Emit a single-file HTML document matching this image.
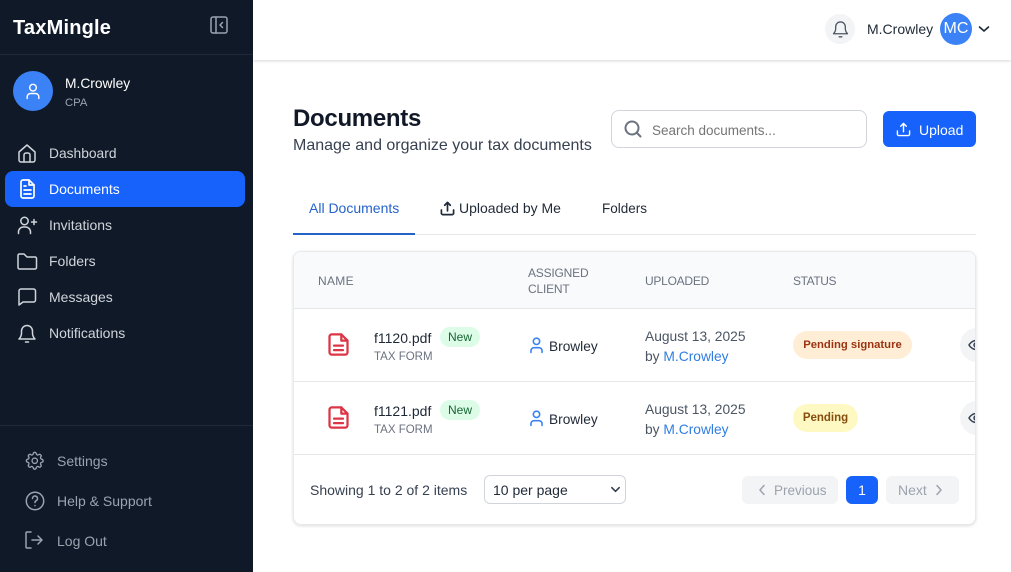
<!DOCTYPE html>
<html><head><meta charset="utf-8"><style>
html,body{margin:0;padding:0;width:1011px;height:572px;overflow:hidden;background:#fff;font-family:"Liberation Sans",sans-serif}
#r{position:relative;width:1011px;height:572px;overflow:hidden}
.t{position:absolute;white-space:nowrap;line-height:20px;font-size:14px}
.b{position:absolute;box-sizing:border-box}
svg{position:absolute;fill:none;stroke:currentColor;stroke-width:1.500;stroke-linecap:round;stroke-linejoin:round}
.n{color:#d1d5db}.f{color:#9ca3af}
.h{font-size:12px;color:#6b7280;line-height:16px}
.g{color:#4b5563;font-size:13.800px}.l{color:#2f7de1}
</style></head><body><div id="r">
<div class="b" style="left:0;top:0;width:253px;height:572px;background:#0f1928"></div>
<div class="b" style="left:0;top:54px;width:253px;height:1px;background:#1f2937"></div>
<div class="b" style="left:0;top:425px;width:253px;height:1px;background:#1f2937"></div>
<div class="t" style="left:13px;top:15px;font-size:20px;line-height:26px;font-weight:700;color:#fff;letter-spacing:.2px">TaxMingle</div>
<svg style="left:208px;top:14px;color:#9ca3af" width="22" height="22" viewBox="0 0 22 22"><rect x="3" y="3" width="16" height="16" rx="2"/><path d="M8 3v16M14.500 8.500L12 11l2.500 2.500"/></svg>
<div class="b" style="left:13px;top:71px;width:40px;height:40px;border-radius:50%;background:#3b82f6"></div>
<svg style="left:23px;top:81px;color:#fff;stroke-width:1.700" width="20" height="20" viewBox="0 0 24 24"><circle cx="12" cy="8" r="4"/><path d="M5 21v-2a4 4 0 0 1 4-4h6a4 4 0 0 1 4 4v2"/></svg>
<div class="t" style="left:65px;top:74px;color:#fff;font-size:13.800px">M.Crowley</div>
<div class="t" style="left:65px;top:93px;font-size:11.300px;color:#9ca3af">CPA</div>

<svg style="left:15px;top:141px;color:#d1d5db" width="24" height="24" viewBox="0 0 24 24"><path d="M4 11l8-7 8 7v8a2 2 0 0 1-2 2H6a2 2 0 0 1-2-2z"/><path d="M9 21v-7a2 2 0 0 1 2-2h2a2 2 0 0 1 2 2v7"/></svg>
<div class="t n" style="left:49px;top:144px;font-size:13.800px">Dashboard</div>
<div class="b" style="left:5px;top:171px;width:240px;height:36px;border-radius:8px;background:#1662fb"></div>
<svg style="left:15px;top:177px;color:#fff;stroke-width:1.700" width="24" height="24" viewBox="0 0 24 24"><path d="M14 3H8a2 2 0 0 0-2 2v14a2 2 0 0 0 2 2h9a2 2 0 0 0 2-2V8z"/><path d="M14 3v5h5M9 13h7M9 17h7M9 9h2"/></svg>
<div class="t" style="left:49px;top:179px;color:#fff">Documents</div>
<svg style="left:15px;top:213px;color:#d1d5db" width="24" height="24" viewBox="0 0 24 24"><circle cx="9.500" cy="8" r="3.700"/><path d="M3.500 20.500V19a5 5 0 0 1 5-5h2a5 5 0 0 1 5 5v1.500M19 6.500v5M16.500 9h5"/></svg>
<div class="t n" style="left:49px;top:215px">Invitations</div>
<svg style="left:15px;top:249px;color:#d1d5db" width="24" height="24" viewBox="0 0 24 24"><path d="M4.500 5h4.500l3 3h8a1.500 1.500 0 0 1 1.500 1.500V18.500a1.500 1.500 0 0 1-1.500 1.500H4.500A1.500 1.500 0 0 1 3 18.500V6.500A1.500 1.500 0 0 1 4.500 5z"/></svg>
<div class="t n" style="left:49px;top:251px">Folders</div>
<svg style="left:15px;top:285px;color:#d1d5db" width="24" height="24" viewBox="0 0 24 24"><path d="M4 20V6a2 2 0 0 1 2-2h12.500a2 2 0 0 1 2 2v9a2 2 0 0 1-2 2H8z"/></svg>
<div class="t n" style="left:49px;top:287px">Messages</div>
<svg style="left:15px;top:321px;color:#d1d5db" width="24" height="24" viewBox="0 0 24 24"><path d="M4 18c1.500-1.500 2.500-3 2.500-6V10a5.500 5.500 0 0 1 11 0v2c0 3 1 4.500 2.500 6zM10.500 21h3"/></svg>
<div class="t n" style="left:49px;top:323px">Notifications</div>

<svg style="left:24px;top:450px;color:#9ca3af" width="21.500" height="21.500" viewBox="0 0 24 24"><path d="M10.300 4.300a1.700 1.700 0 0 1 3.400 0 1.700 1.700 0 0 0 2.600 1 1.700 1.700 0 0 1 2.400 2.400 1.700 1.700 0 0 0 1 2.600 1.700 1.700 0 0 1 0 3.400 1.700 1.700 0 0 0-1 2.600 1.700 1.700 0 0 1-2.400 2.400 1.700 1.700 0 0 0-2.600 1 1.700 1.700 0 0 1-3.400 0 1.700 1.700 0 0 0-2.600-1 1.700 1.700 0 0 1-2.400-2.400 1.700 1.700 0 0 0-1-2.600 1.700 1.700 0 0 1 0-3.400 1.700 1.700 0 0 0 1-2.600 1.700 1.700 0 0 1 2.400-2.400 1.700 1.700 0 0 0 2.600-1z"/><circle cx="12" cy="12" r="3"/></svg>
<div class="t f" style="left:57px;top:451px">Settings</div>
<svg style="left:23px;top:489px;color:#9ca3af" width="24" height="24" viewBox="0 0 24 24"><circle cx="12" cy="12" r="8.700"/><path d="M9.500 9.500a2.500 2.500 0 1 1 3.500 2.300c-.7.300-1 .8-1 1.700M12 16.500v.1"/></svg>
<div class="t f" style="left:57px;top:491px">Help &amp; Support</div>
<svg style="left:22px;top:528px;color:#9ca3af" width="24" height="24" viewBox="0 0 24 24"><path d="M9 4H5a1 1 0 0 0-1 1v14a1 1 0 0 0 1 1h4M10 12h10M16 8l4 4-4 4"/></svg>
<div class="t f" style="left:57px;top:531px">Log Out</div>

<div class="b" style="left:253px;top:0;width:758px;height:60px;background:#fff;box-shadow:0 1px 3px rgba(0,0,0,.16)"></div>
<div class="b" style="left:825px;top:14px;width:30px;height:30px;border-radius:50%;background:#f3f4f6"></div>
<svg style="left:830px;top:18px;color:#4b5563" width="21" height="21" viewBox="0 0 24 24"><path d="M4 18c1.500-1.500 2.500-3 2.500-6V10a5.500 5.500 0 0 1 11 0v2c0 3 1 4.500 2.500 6zM10.500 21.500h3"/></svg>
<div class="t" style="left:867px;top:19px;color:#1f2937">M.Crowley</div>
<div class="b" style="left:940px;top:13px;width:32px;height:32px;border-radius:50%;background:#3b82f6;color:#fff;font-size:16px;line-height:32px;text-align:center">MC</div>
<svg style="left:977px;top:22px;color:#1f2937;stroke-width:1.600" width="14" height="14" viewBox="0 0 14 14"><path d="M2.500 5l4.500 4L11.500 5"/></svg>

<div class="t" style="left:293px;top:103px;font-size:24px;line-height:32px;font-weight:700;color:#111827;letter-spacing:-.3px">Documents</div>
<div class="t" style="left:293px;top:136px;font-size:16px;color:#374151">Manage and organize your tax documents</div>
<div class="b" style="left:611px;top:110px;width:256px;height:38px;border:1px solid #d1d5db;border-radius:8px"></div>
<svg style="left:622px;top:118px;color:#6b7280;stroke-width:2" width="22" height="22" viewBox="0 0 22 22"><circle cx="10" cy="10" r="6.500"/><path d="M15 15l3.500 3.500"/></svg>
<div class="t" style="left:652px;top:121px;color:#757575;font-size:13.500px">Search documents...</div>
<div class="b" style="left:883px;top:111px;width:93px;height:36px;border-radius:6px;background:#1662fb"></div>
<svg style="left:896px;top:122px;color:#fff;stroke-width:1.500" width="15" height="15" viewBox="0 0 16 16"><path d="M1.500 9.500v3.500a1.500 1.500 0 0 0 1.500 1.500h10a1.500 1.500 0 0 0 1.500-1.500V9.500M8 10.500V2M5 4.500L8 1.500l3 3"/></svg>
<div class="t" style="left:919px;top:120px;color:#fff">Upload</div>

<div class="b" style="left:293px;top:234px;width:683px;height:1px;background:#e5e7eb"></div>
<div class="b" style="left:293px;top:233px;width:122px;height:2px;background:#2563c9"></div>
<div class="t" style="left:309px;top:198px;font-size:14px;color:#2563c9">All Documents</div>
<svg style="left:440px;top:201px;color:#1f2937;stroke-width:1.800" width="15" height="15" viewBox="0 0 16 16"><path d="M1.500 9.500v3.500a1.500 1.500 0 0 0 1.500 1.500h10a1.500 1.500 0 0 0 1.500-1.500V9.500M8 10.500V2M5 4.500L8 1.500l3 3"/></svg>
<div class="t" style="left:459px;top:198px;font-size:14px;color:#1f2937">Uploaded by Me</div>
<div class="t" style="left:602px;top:199px;font-size:13.500px;color:#1f2937">Folders</div>

<div class="b" style="left:293px;top:251px;width:683px;height:274px;border:1px solid #e8eaed;border-radius:8px;box-shadow:0 1px 3px rgba(0,0,0,.14);background:#fff;overflow:hidden">
<div class="b" style="left:0;top:0;width:681px;height:57px;background:#f9fafb;border-bottom:1px solid #e5e7eb"></div>
<div class="b" style="left:0;top:129px;width:681px;height:1px;background:#e5e7eb"></div>
<div class="b" style="left:0;top:202px;width:681px;height:1px;background:#e5e7eb"></div>
<div class="b" style="left:666px;top:76px;width:34px;height:34px;border-radius:50%;background:#f3f4f6"></div>
<div class="b" style="left:666px;top:149px;width:34px;height:34px;border-radius:50%;background:#f3f4f6"></div>
<svg style="left:674px;top:85px;color:#374151" width="16" height="16" viewBox="0 0 16 16"><path d="M1 8s2.500-4.500 7-4.500S15 8 15 8s-2.500 4.500-7 4.500S1 8 1 8z"/><circle cx="8" cy="8" r="2"/></svg>
<svg style="left:674px;top:158px;color:#374151" width="16" height="16" viewBox="0 0 16 16"><path d="M1 8s2.500-4.500 7-4.500S15 8 15 8s-2.500 4.500-7 4.500S1 8 1 8z"/><circle cx="8" cy="8" r="2"/></svg>
</div>

<div class="t h" style="left:318px;top:273px;letter-spacing:.3px">NAME</div>
<div class="t h" style="left:528px;top:265px;letter-spacing:-.2px">ASSIGNED</div>
<div class="t h" style="left:528px;top:281px;letter-spacing:-.2px">CLIENT</div>
<div class="t h" style="left:645px;top:273px;letter-spacing:-.25px">UPLOADED</div>
<div class="t h" style="left:793px;top:273px;letter-spacing:-.4px">STATUS</div>

<svg style="left:324.500px;top:331px;color:#dc3545;stroke-width:2" width="27" height="27" viewBox="0 0 24 24"><path d="M14.500 3H6a2 2 0 0 0-2 2v14a2 2 0 0 0 2 2h12a2 2 0 0 0 2-2V8.500z"/><path d="M14.500 3v5.500H20M8 13h8M8 17h8"/></svg>
<div class="t" style="left:374px;top:328px;color:#1f2937">f1120.pdf</div>
<div class="b" style="left:440px;top:327px;width:40px;height:20px;border-radius:10px;background:#dcfce7;color:#166534;font-size:12px;line-height:20px;text-align:center">New</div>
<div class="t" style="left:374px;top:347px;font-size:11.500px;color:#6b7280">TAX FORM</div>
<svg style="left:527px;top:335px;color:#3b82f6;stroke-width:2" width="19" height="19" viewBox="0 0 24 24"><circle cx="12" cy="8" r="4"/><path d="M5 22v-2a4 4 0 0 1 4-4h6a4 4 0 0 1 4 4v2"/></svg>
<div class="t" style="left:549px;top:337px;color:#1f2937;font-size:13.700px">Browley</div>
<div class="t g" style="left:645px;top:327px">August 13, 2025</div>
<div class="t g" style="left:645px;top:347px">by <span class="l">M.Crowley</span></div>
<div class="b" style="left:793px;top:331px;width:119px;height:28px;border-radius:14px;background:#ffedd5;color:#9a3412;font-size:11.300px;font-weight:700;line-height:29px;text-align:center">Pending signature</div>

<svg style="left:324.500px;top:404px;color:#dc3545;stroke-width:2" width="27" height="27" viewBox="0 0 24 24"><path d="M14.500 3H6a2 2 0 0 0-2 2v14a2 2 0 0 0 2 2h12a2 2 0 0 0 2-2V8.500z"/><path d="M14.500 3v5.500H20M8 13h8M8 17h8"/></svg>
<div class="t" style="left:374px;top:401px;color:#1f2937">f1121.pdf</div>
<div class="b" style="left:440px;top:400px;width:40px;height:20px;border-radius:10px;background:#dcfce7;color:#166534;font-size:12px;line-height:20px;text-align:center">New</div>
<div class="t" style="left:374px;top:420px;font-size:11.500px;color:#6b7280">TAX FORM</div>
<svg style="left:527px;top:408px;color:#3b82f6;stroke-width:2" width="19" height="19" viewBox="0 0 24 24"><circle cx="12" cy="8" r="4"/><path d="M5 22v-2a4 4 0 0 1 4-4h6a4 4 0 0 1 4 4v2"/></svg>
<div class="t" style="left:549px;top:410px;color:#1f2937;font-size:13.700px">Browley</div>
<div class="t g" style="left:645px;top:400px">August 13, 2025</div>
<div class="t g" style="left:645px;top:420px">by <span class="l">M.Crowley</span></div>
<div class="b" style="left:793px;top:404px;width:65px;height:28px;border-radius:14px;background:#fef9c3;color:#854d0e;font-size:11.500px;font-weight:700;line-height:29px;text-align:center">Pending</div>

<div class="t" style="left:310px;top:480px;color:#374151">Showing 1 to 2 of 2 items</div>
<div class="b" style="left:484px;top:475px;width:142px;height:29px;border:1px solid #d1d5db;border-radius:6px"></div>
<div class="t" style="left:493px;top:480px;color:#1f2937">10 per page</div>
<svg style="left:610px;top:484px;color:#374151;stroke-width:1.800" width="11" height="11" viewBox="0 0 12 12"><path d="M2 4l4 4 4-4"/></svg>
<div class="b" style="left:742px;top:476px;width:96px;height:28px;border-radius:6px;background:#f3f4f6"></div>
<svg style="left:755px;top:483px;color:#9ca3af" width="14" height="14" viewBox="0 0 14 14"><path d="M9 2.500L5 7l4 4.500"/></svg>
<div class="t f" style="left:774px;top:481px;font-size:13.500px">Previous</div>
<div class="b" style="left:846px;top:476px;width:32px;height:28px;border-radius:6px;background:#1662fb;color:#fff;font-size:14px;line-height:28px;text-align:center">1</div>
<div class="b" style="left:886px;top:476px;width:73px;height:28px;border-radius:6px;background:#f3f4f6"></div>
<div class="t f" style="left:898px;top:480px">Next</div>
<svg style="left:932px;top:483px;color:#9ca3af" width="14" height="14" viewBox="0 0 14 14"><path d="M5 2.500L9 7l-4 4.500"/></svg>
</div></body></html>
